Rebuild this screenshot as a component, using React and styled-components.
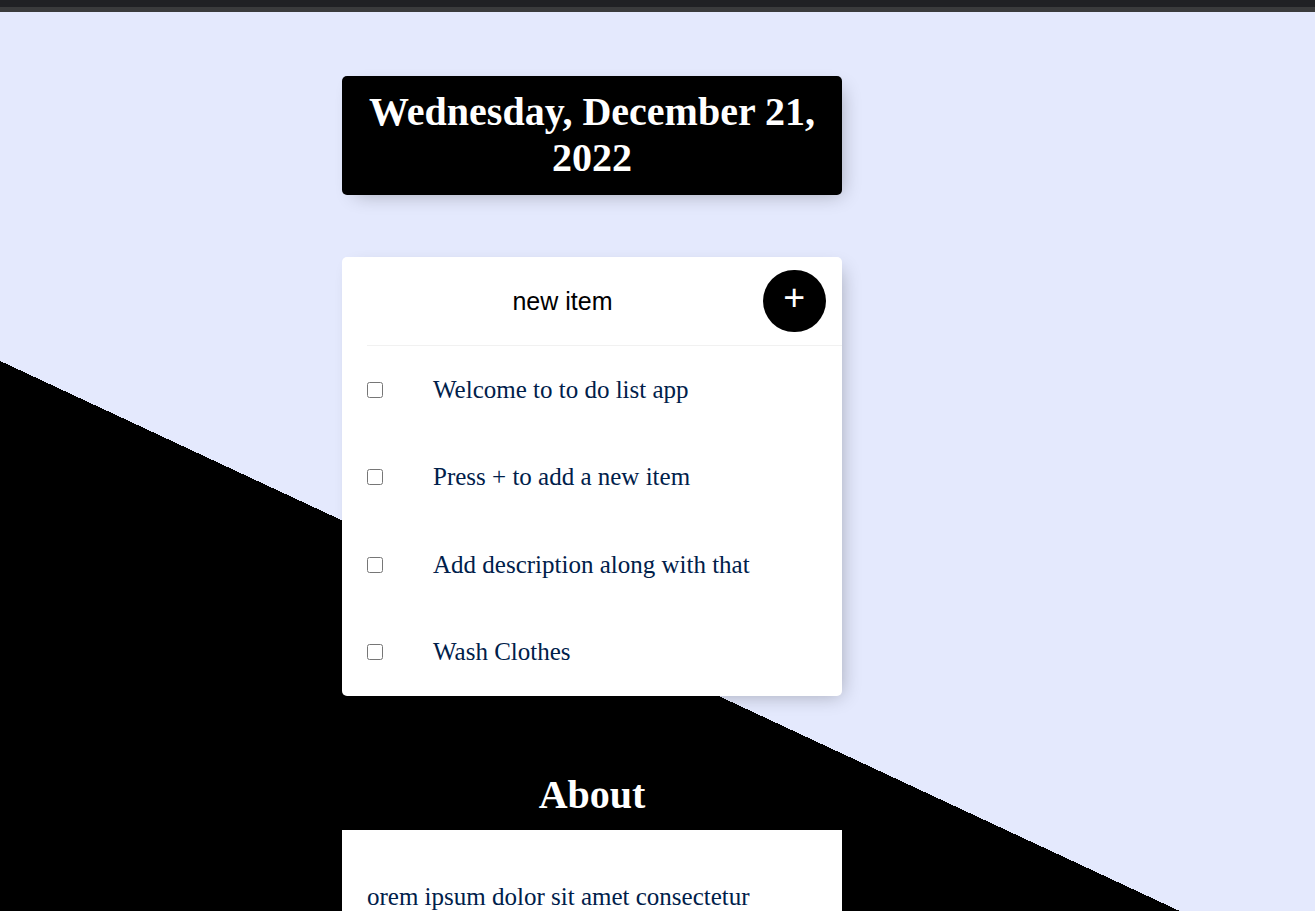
import React from 'react';
import styled, { createGlobalStyle } from 'styled-components';

const GlobalStyle = createGlobalStyle`
  html, body {
    margin: 0;
    padding: 0;
    overflow: hidden;
  }
  body {
    font-family: "Liberation Serif", "Times New Roman", serif;
    background: #e4e9fd;
  }
`;

const TopBar = styled.div`
  height: 7px;
  background: #202124;
  border-bottom: 5px solid #3a3b3c;
`;

const Page = styled.main`
  min-height: 1311px;
  padding-top: 64px;
  box-sizing: border-box;
  background-color: #e4e9fd;
  background-image: linear-gradient(25deg, #000 50%, #e4e9fd 50%);
  background-size: 1315px 1311px;
  background-repeat: no-repeat;
`;

const Column = styled.div`
  width: 1184px;
`;

const Box = styled.section`
  width: 500px;
  margin: 0 auto 62.5px;
  background: ${(p) => p.$bg || '#fff'};
  border-radius: ${(p) => (p.$square ? '0' : '5px')};
  box-shadow: ${(p) => (p.$flat ? 'none' : '6.25px 6.25px 18.75px -6.25px rgba(0, 0, 0, 0.3)')};
`;

const DateTitle = styled.h1`
  margin: 0;
  padding: 12.5px;
  font-size: 40px;
  font-weight: bold;
  line-height: 46.75px;
  text-align: center;
  color: #fff;
`;

const Item = styled.div`
  min-height: 87.5px;
  display: flex;
  align-items: center;
`;

const AddForm = styled.form`
  min-height: 89px;
  display: flex;
  align-items: center;
  gap: 5px;
  margin-left: 25px;
  border-bottom: 1px solid #f1f1f1;
  box-sizing: border-box;
`;

const TextInput = styled.input`
  width: 391px;
  height: 75px;
  border: none;
  background: transparent;
  text-align: center;
  font-family: "Liberation Sans", Arial, sans-serif;
  font-size: 25px;
  padding: 0;
  outline: none;

  &::placeholder {
    color: #000;
    opacity: 1;
  }
`;

const AddButton = styled.button`
  width: 62.5px;
  height: 62.5px;
  flex-shrink: 0;
  border: 0;
  border-radius: 50%;
  background: #000;
  color: #fff;
  font-family: "Liberation Sans", Arial, sans-serif;
  font-size: 37.5px;
  line-height: 1;
  padding: 0 0 7.5px;
  cursor: pointer;
`;

const Check = styled.input`
  margin: 25px;
  width: 16px;
  height: 16px;
  flex-shrink: 0;
`;

const ItemText = styled.p`
  margin: 0;
  padding: 25px;
  font-size: 25px;
  color: #00204a;
`;

const SectionTitle = styled.h1`
  margin: 0 auto;
  width: 500px;
  padding: 13px 0 12px;
  font-size: 40px;
  line-height: 46px;
  text-align: center;
  color: #fff;
`;

const AboutText = styled.p`
  margin: 0;
  padding: 53px 25px 25px;
  font-size: 25px;
  color: #00204a;
`;

const items = [
  'Welcome to to do list app',
  'Press + to add a new item',
  'Add description along with that',
  'Wash Clothes',
];

export default function App() {
  return (
    <>
      <GlobalStyle />
      <TopBar />
      <Page>
        <Column>
          <Box $bg="#000">
            <DateTitle>Wednesday, December 21, 2022</DateTitle>
          </Box>

          <Box>
            <AddForm onSubmit={(e) => e.preventDefault()}>
              <TextInput type="text" placeholder="new item" autoComplete="off" />
              <AddButton type="submit">+</AddButton>
            </AddForm>
            {items.map((text) => (
              <Item key={text}>
                <Check type="checkbox" />
                <ItemText>{text}</ItemText>
              </Item>
            ))}
          </Box>

          <SectionTitle>About</SectionTitle>
          <Box $square $flat>
            <AboutText>
              orem ipsum dolor sit amet consectetur adipisicing elit. Quia, nemo
              eius. Quos, ipsa veritatis. Eum atque minima voluptates.
            </AboutText>
          </Box>
        </Column>
      </Page>
    </>
  );
}
